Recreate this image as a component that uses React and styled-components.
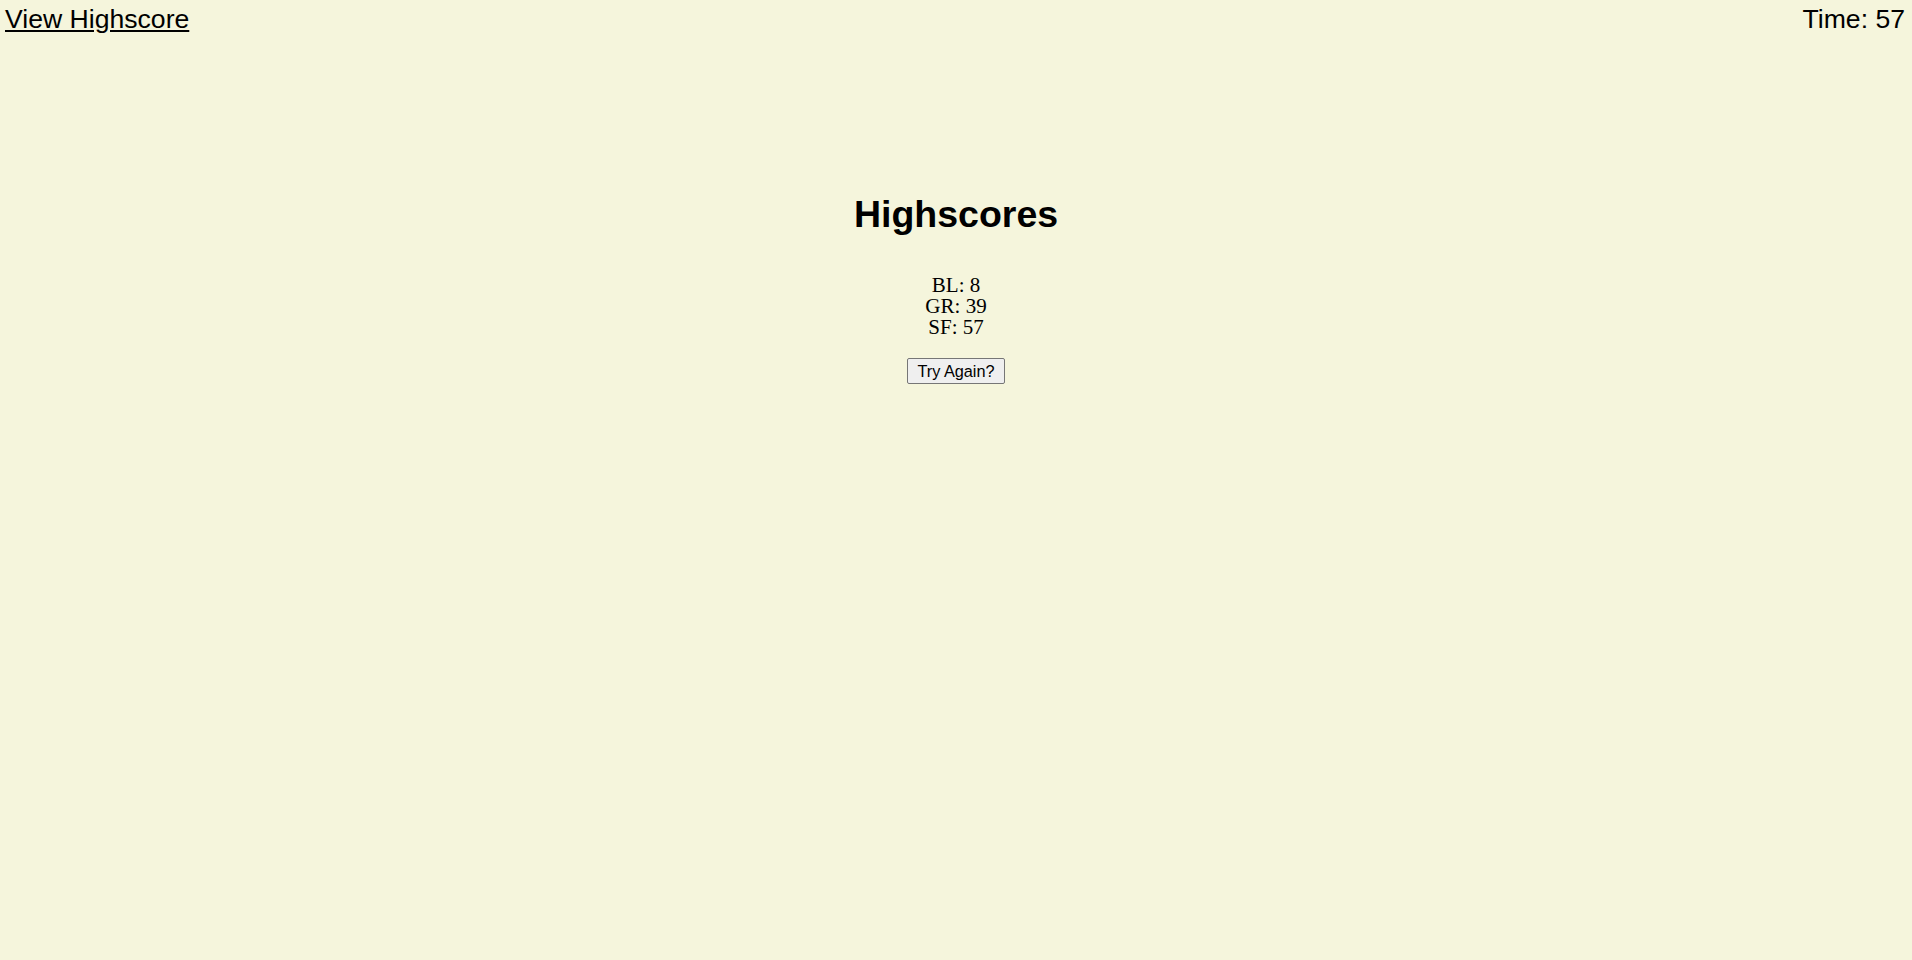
import React from 'react'
import styled, { createGlobalStyle } from 'styled-components'

const GlobalStyle = createGlobalStyle`
  html, body {
    margin: 0;
    padding: 0;
    background: #f5f5dc;
  }
  body {
    min-height: 960px;
    font-family: "Liberation Serif", "Times New Roman", serif;
    color: #000;
  }
`

const scores = [
  { name: 'BL', score: 8 },
  { name: 'GR', score: 39 },
  { name: 'SF', score: 57 },
]

const App = () => {
  return (
    <>
      <GlobalStyle />
      <Page>
        <TopBar>
          <HighscoreLink href="#">View Highscore</HighscoreLink>
          <Timer>Time: 57</Timer>
        </TopBar>
        <Board>
          <Title>Highscores</Title>
          <ScoreList>
            {scores.map((s) => (
              <ScoreRow key={s.name}>{s.name}: {s.score}</ScoreRow>
            ))}
          </ScoreList>
          <RetryButton type="button">Try Again?</RetryButton>
        </Board>
      </Page>
    </>
  )
}

const Page = styled.div`
  width: 100%;
  min-height: 960px;
`
const TopBar = styled.header`
  display: flex;
  justify-content: space-between;
  align-items: flex-start;
  padding: 4px 7px 0 5px;
  font-family: "Liberation Sans", Arial, sans-serif;
  font-size: 26.6px;
`
const HighscoreLink = styled.a`
  color: #000;
  text-decoration: underline;
`
const Timer = styled.div`
  color: #000;
`
const Board = styled.main`
  display: flex;
  flex-direction: column;
  align-items: center;
  padding-top: 158px;
`
const Title = styled.h1`
  margin: 0;
  font-family: "Liberation Sans", Arial, sans-serif;
  font-size: 37.5px;
  font-weight: 700;
`
const ScoreList = styled.div`
  margin-top: 39px;
  display: flex;
  flex-direction: column;
  align-items: center;
  font-size: 21px;
  line-height: 21px;
`
const ScoreRow = styled.div``
const RetryButton = styled.button`
  margin-top: 20px;
  font-family: "Liberation Sans", Arial, sans-serif;
  font-size: 16.3px;
  padding: 2px 9px;
  height: 26px;
  color: #000;
  background: #efefef;
  border: 1px solid #767676;
  border-radius: 2px;
  cursor: pointer;
`

export default App
